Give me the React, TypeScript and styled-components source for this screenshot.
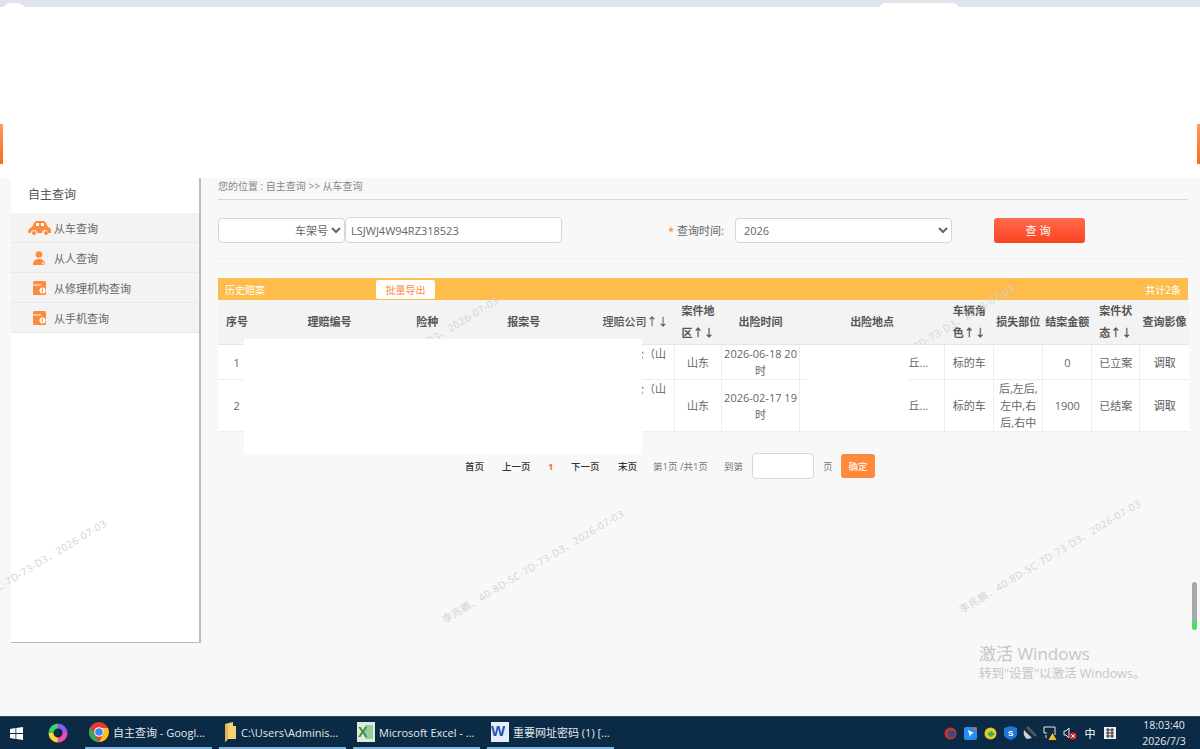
import styled, { createGlobalStyle } from 'styled-components';

const GlobalStyle = createGlobalStyle`
  html, body {
    margin: 0;
    padding: 0;
    height: 749px;
    overflow: hidden;
    background: #f8f8f8;
    font-family: "Open Sans", "Noto Sans CJK SC", sans-serif;
  }
  * { box-sizing: border-box; }
`;

const Page = styled.div`
  position: relative;
  display: flex;
  flex-direction: column;
  width: 1200px;
  height: 749px;
  overflow: hidden;
  color: #666;
`;

/* 顶部被涂白的区域 */
const TopBlock = styled.div`
  position: relative;
  z-index: 5;
  flex: none;
  height: 178px;
  background: #fff;
  border-top: 7px solid #dfe3ec;
`;

const SideStripe = styled.div<{ $right?: boolean }>`
  position: absolute;
  top: 117px;
  ${({ $right }) => ($right ? 'right: 0;' : 'left: 0;')}
  width: 3px;
  height: 40px;
  background: linear-gradient(#ff9a5c, #ff6a1e);
`;

const CornerBump = styled.div<{ $left: number; $width: number }>`
  position: absolute;
  top: -4px;
  left: ${({ $left }) => $left}px;
  width: ${({ $width }) => $width}px;
  height: 8px;
  border-radius: 8px 8px 0 0;
  background: #fff;
`;

const Body = styled.div`
  flex: 1;
  display: flex;
  min-height: 0;
`;

const Sidebar = styled.aside`
  flex: none;
  width: 190px;
  height: 465px;
  margin-left: 11px;
  background: #fff;
  border-right: 2px solid #bcbcbc;
  border-bottom: 1px solid #bcbcbc;
`;

const SideTitle = styled.div`
  height: 35px;
  padding: 9px 0 0 17px;
  font-size: 12px;
  line-height: 16px;
  color: #555;
`;

const NavItem = styled.div`
  display: flex;
  align-items: center;
  height: 30px;
  background: #f3f3f3;
  border-bottom: 1px solid #e8e8e8;
  font-size: 11px;
  color: #666;
`;

const NavIcon = styled.span`
  flex: none;
  display: flex;
  justify-content: center;
  width: 43px;
  padding-left: 14px;
`;

const Main = styled.main`
  flex: 1;
  min-width: 0;
  padding: 0 12px 0 17px;
`;

const Crumb = styled.div`
  height: 22px;
  padding-top: 2px;
  border-bottom: 1px solid #d8d8d8;
  font-size: 10px;
  line-height: 13px;
  color: #888;
`;

const SearchRow = styled.div`
  display: flex;
  align-items: center;
  height: 59px;
  padding-top: 2px;
  border-bottom: 1px solid #f0f0f0;
`;

const Field = styled.select<{ $width: number; $right?: boolean }>`
  width: ${({ $width }) => $width}px;
  height: 25px;
  padding: 0 ${({ $right }) => ($right ? '0' : '4px')};
  border: 1px solid #d6d6d6;
  border-radius: 4px;
  background: #fff;
  font: 11px "Open Sans", "Noto Sans CJK SC", sans-serif;
  color: #666;
  ${({ $right }) => ($right ? 'text-align-last: right;' : '')}
`;

const VinInput = styled.input`
  width: 217px;
  height: 26px;
  padding: 0 5px;
  border: 1px solid #d6d6d6;
  border-radius: 4px;
  background: #fff;
  font: 11px "Open Sans", "Noto Sans CJK SC", sans-serif;
  color: #666;
`;

const TimeLabel = styled.label`
  margin-left: 106px;
  width: 67px;
  font-size: 11px;
  color: #666;
  white-space: pre;
`;

const Star = styled.span`
  color: #ff7a2e;
`;

const SearchBtn = styled.button`
  width: 91px;
  height: 25px;
  margin-left: 42px;
  border: 0;
  border-radius: 3px;
  background: linear-gradient(#ff6a4c, #fb4423);
  color: #fff;
  font: 11px "Open Sans", "Noto Sans CJK SC", sans-serif;
  letter-spacing: 3px;
`;

const ResultBar = styled.div`
  display: flex;
  align-items: center;
  justify-content: space-between;
  height: 22px;
  margin-top: 19px;
  padding: 0 7px;
  background: #fdbc4b;
  font-size: 10px;
  color: #fff;
`;

const BarLeft = styled.div`
  display: flex;
  align-items: center;
`;

const BarTitle = styled.span`
  width: 151px;
`;

const ExportBtn = styled.button`
  width: 59px;
  height: 19px;
  padding: 0;
  border: 0;
  border-radius: 2px;
  background: #fff;
  color: #ff8a4a;
  font: 10px "Open Sans", "Noto Sans CJK SC", sans-serif;
`;

const TableWrap = styled.div`
  position: relative;
`;

const Table = styled.table`
  width: 971px;
  table-layout: fixed;
  border-collapse: collapse;
  background: #f3f3f3;
`;

const Col = styled.col<{ $w: number }>`
  width: ${({ $w }) => $w}px;
`;

const Th = styled.th`
  height: 44px;
  padding: 0;
  border-bottom: 1px solid #e6e6e6;
  font-size: 11px;
  font-weight: 700;
  line-height: 22px;
  text-align: center;
  color: #555;
`;

const ThPlain = styled(Th)`
  font-weight: 500;
`;

const Row = styled.tr`
  position: relative;
  z-index: 2;
`;

const Td = styled.td<{ $h?: number }>`
  height: ${({ $h }) => $h ?? 34}px;
  padding: 0;
  background: #fff;
  border-right: 1px solid #eee;
  border-bottom: 1px solid #eee;
  font-size: 11px;
  line-height: 17px;
  text-align: center;
  color: #666;
`;

const TdClipped = styled(Td)`
  padding-right: 8px;
  vertical-align: top;
  text-align: right;
  white-space: nowrap;
  overflow: hidden;
`;

const TdPlace = styled(Td)`
  padding-right: 16px;
  text-align: right;
`;

const TdOpen = styled(Td)`
  border-right: 0;
  color: #555;
`;

/* 打码用的白块，盖在表格上面 */
const Mask = styled.div<{ $x: number; $y: number; $w: number; $h: number }>`
  position: absolute;
  z-index: 3;
  left: ${({ $x }) => $x}px;
  top: ${({ $y }) => $y}px;
  width: ${({ $w }) => $w}px;
  height: ${({ $h }) => $h}px;
  background: #fff;
`;

const Pager = styled.div`
  display: flex;
  align-items: center;
  height: 26px;
  margin-top: 21px;
  padding-left: 247px;
  font-size: 9.5px;
  color: #333;
`;

const PagerLink = styled.span<{ $w: number; $active?: boolean }>`
  width: ${({ $w }) => $w}px;
  white-space: nowrap;
  color: ${({ $active }) => ($active ? '#ff6a2e' : '#333')};
  font-weight: ${({ $active }) => ($active ? 700 : 500)};
`;

const PagerNote = styled.span<{ $w: number }>`
  width: ${({ $w }) => $w}px;
  white-space: nowrap;
  color: #777;
`;

const PagerInput = styled.input`
  width: 62px;
  height: 26px;
  margin-right: 9px;
  border: 1px solid #d8d8d8;
  border-radius: 4px;
  background: #fff;
`;

const PagerOk = styled.button`
  width: 34px;
  height: 24px;
  padding: 0;
  border: 0;
  border-radius: 3px;
  background: #ff8a3c;
  color: #fff;
  font: 9.5px "Open Sans", "Noto Sans CJK SC", sans-serif;
`;

const Watermark = styled.div<{ $x: number; $y: number }>`
  position: absolute;
  z-index: 1;
  left: ${({ $x }) => $x}px;
  top: ${({ $y }) => $y}px;
  transform: rotate(-31deg);
  transform-origin: left center;
  font-size: 10px;
  line-height: 12px;
  letter-spacing: 0.55px;
  white-space: nowrap;
  color: #d2d2d2;
`;

const Activate = styled.div`
  position: absolute;
  left: 979px;
  top: 644px;
  color: #c6c6c6;
`;

const ActivateTitle = styled.div`
  font-size: 17px;
  line-height: 20px;
`;

const ActivateSub = styled.div`
  font-size: 12.5px;
  line-height: 20px;
`;

const ScrollThumb = styled.div`
  position: absolute;
  left: 1192px;
  top: 582px;
  width: 5px;
  height: 48px;
  border-radius: 3px;
  background: linear-gradient(#a9a9a9 0 82%, #4fdc6c 82%);
`;

const Taskbar = styled.footer`
  position: relative;
  flex: none;
  display: flex;
  align-items: center;
  height: 33px;
  padding-left: 10px;
  background: #0b2a45;
  border-top: 1px solid #31465a;
`;

const StartBtn = styled.span`
  flex: none;
  display: flex;
  width: 38px;
`;

const RingBtn = styled.span`
  flex: none;
  display: flex;
  width: 37px;
`;

const TaskItem = styled.div`
  flex: none;
  display: flex;
  align-items: center;
  gap: 4px;
  width: 127px;
  height: 32px;
  margin-right: 7px;
  padding-left: 4px;
  border-bottom: 2px solid #7cb4dc;
  font-size: 11px;
  color: #e4e8ec;
  white-space: nowrap;
  overflow: hidden;
`;

const Tray = styled.div`
  display: flex;
  align-items: center;
  gap: 6px;
  margin-left: auto;
  padding-right: 5px;
`;

const TrayIcon = styled.span`
  flex: none;
  display: flex;
  justify-content: center;
  width: 14px;
  font-size: 11px;
  color: #fff;
`;

const Clock = styled.div`
  width: 62px;
  margin-left: 10px;
  text-align: center;
  font-size: 10.5px;
  line-height: 16px;
  color: #e4e8ec;
`;

const CarIcon = () => (
  <svg width="24" height="14" viewBox="0 0 24 14">
    <path
      fill="#ff8a3c"
      d="M0 11c0-3 2-4 4-5l2-4c.6-1 1.400-2 3-2h6c1.600 0 2.400 1 3 2l2 4c2 .6 3 2 3 4v1c0 1-1 1-2 1h-1a3 3 0 0 0-6 0H9a3 3 0 0 0-6 0H1c-.6 0-1-.4-1-1z"
    />
    <rect x="8" y="2" width="3" height="3" fill="#fff" />
    <rect x="13" y="2" width="3" height="3" fill="#fff" />
    <circle cx="6" cy="12" r="2" fill="#ff8a3c" />
    <circle cx="18" cy="12" r="2" fill="#ff8a3c" />
  </svg>
);

const PersonIcon = () => (
  <svg width="13" height="14" viewBox="0 0 13 14">
    <circle cx="6" cy="3.500" r="3.300" fill="#ff8a3c" />
    <path fill="#ff8a3c" d="M0 14c0-4 2-6 6-6 2 0 3.500.6 4.500 2L8 14z" />
    <circle cx="10" cy="12" r="1.600" fill="none" stroke="#ff8a3c" />
  </svg>
);

const CalendarIcon = () => (
  <svg width="13" height="14" viewBox="0 0 13 14">
    <rect width="13" height="14" rx="1.500" fill="#ff8a3c" />
    <rect y="3.500" width="8" height="1" fill="#fff" />
    <circle cx="9.500" cy="9.500" r="3" fill="#fff" />
    <rect x="9" y="7.500" width="1" height="4" fill="#ff8a3c" />
  </svg>
);

const WinLogo = () => (
  <svg width="13" height="13" viewBox="0 0 13 13" fill="#fff">
    <path d="M0 2l5.500-.9v5H0zM6.300 1L13 0v6.100H6.300zM0 6.900h5.500v5L0 11zM6.300 6.900H13V13l-6.700-1z" />
  </svg>
);

const RingLogo = () => (
  <svg width="20" height="22" viewBox="0 0 20 22">
    <circle cx="10" cy="11" r="7" fill="none" stroke="#f04ea0" strokeWidth="5" strokeDasharray="11 33" />
    <circle cx="10" cy="11" r="7" fill="none" stroke="#ffd23c" strokeWidth="5" strokeDasharray="11 33" strokeDashoffset="-11" />
    <circle cx="10" cy="11" r="7" fill="none" stroke="#3cd070" strokeWidth="5" strokeDasharray="11 33" strokeDashoffset="-22" />
    <circle cx="10" cy="11" r="7" fill="none" stroke="#8a5cf0" strokeWidth="5" strokeDasharray="11 33" strokeDashoffset="-33" />
  </svg>
);

const ChromeLogo = () => (
  <svg width="20" height="20" viewBox="0 0 20 20">
    <circle cx="10" cy="10" r="10" fill="#e33b2e" />
    <path fill="#3aa757" d="M1.300 5 6 13l4 7A10 10 0 0 1 1.300 5z" />
    <path fill="#fbc116" d="M10 6h9a10 10 0 0 1-9 14l5-9z" />
    <circle cx="10" cy="10" r="4.800" fill="#fff" />
    <circle cx="10" cy="10" r="3.800" fill="#4285f4" />
  </svg>
);

const FolderLogo = () => (
  <svg width="14" height="20" viewBox="0 0 14 20">
    <path fill="#f4d272" d="M2 2l8-2v4h3v13H5l-3 3z" />
    <path fill="#e0b550" d="M2 2l3 2v13l-3 3z" />
  </svg>
);

const ExcelLogo = () => (
  <svg width="18" height="20" viewBox="0 0 18 20">
    <rect width="18" height="20" fill="#dfeadf" />
    <rect x="8" y="3" width="8" height="14" fill="#9ccb9c" />
    <text x="1" y="15" fontSize="14" fontWeight="700" fill="#2d8f3a" fontFamily="Liberation Sans">X</text>
  </svg>
);

const WordLogo = () => (
  <svg width="18" height="20" viewBox="0 0 18 20">
    <rect width="18" height="20" fill="#e6edf8" />
    <text x="0" y="14" fontSize="15" fontWeight="700" fill="#1e55b3" fontFamily="Liberation Sans">W</text>
  </svg>
);

const columns = [38, 147, 48, 145, 78, 47, 78, 145, 49, 49, 49, 48, 49];

const rows = [
  { no: 1, time: ['2026-06-18 20', '时'], part: [] as string[], money: '0', status: '已立案', h: 34 },
  { no: 2, time: ['2026-02-17 19', '时'], part: ['后,左后,', '左中,右', '后,右中'], money: '1900', status: '已结案', h: 51 },
];

const marks: [number, number][] = [
  [443, 614],
  [960, 604],
  [-74, 624],
  [318, 401],
  [834, 389],
];

function App() {
  return (
    <Page>
      <GlobalStyle />
      <TopBlock>
        <CornerBump $left={3} $width={22} />
        <CornerBump $left={878} $width={82} />
        <SideStripe />
        <SideStripe $right />
      </TopBlock>

      <Body>
        <Sidebar>
          <SideTitle>自主查询</SideTitle>
          <NavItem>
            <NavIcon>
              <CarIcon />
            </NavIcon>
            从车查询
          </NavItem>
          <NavItem>
            <NavIcon>
              <PersonIcon />
            </NavIcon>
            从人查询
          </NavItem>
          <NavItem>
            <NavIcon>
              <CalendarIcon />
            </NavIcon>
            从修理机构查询
          </NavItem>
          <NavItem>
            <NavIcon>
              <CalendarIcon />
            </NavIcon>
            从手机查询
          </NavItem>
        </Sidebar>

        <Main>
          <Crumb>您的位置 : 自主查询 &gt;&gt; 从车查询</Crumb>
          <SearchRow>
            <Field $width={127} $right>
              <option>车架号</option>
            </Field>
            <VinInput defaultValue="LSJWJ4W94RZ318523" />
            <TimeLabel>
              <Star>* </Star>查询时间:
            </TimeLabel>
            <Field $width={217}>
              <option>2026</option>
            </Field>
            <SearchBtn>查询</SearchBtn>
          </SearchRow>

          <ResultBar>
            <BarLeft>
              <BarTitle>历史赔案</BarTitle>
              <ExportBtn>批量导出</ExportBtn>
            </BarLeft>
            <span>共计2条</span>
          </ResultBar>

          <TableWrap>
            <Table>
              <colgroup>
                {columns.map((w, i) => (
                  <Col key={i} $w={w} />
                ))}
              </colgroup>
              <thead>
                <tr>
                  <Th>序号</Th>
                  <Th>理赔编号</Th>
                  <Th>险种</Th>
                  <Th>报案号</Th>
                  <ThPlain>理赔公司↑↓</ThPlain>
                  <Th>
                    案件地
                    <br />
                    区↑↓
                  </Th>
                  <Th>出险时间</Th>
                  <Th>出险地点</Th>
                  <Th>
                    车辆角
                    <br />
                    色↑↓
                  </Th>
                  <Th>损失部位</Th>
                  <Th>结案金额</Th>
                  <Th>
                    案件状
                    <br />
                    态↑↓
                  </Th>
                  <Th>查询影像</Th>
                </tr>
              </thead>
              <tbody>
                {rows.map((r) => (
                  <Row key={r.no}>
                    <Td $h={r.h}>{r.no}</Td>
                    <Td $h={r.h} />
                    <Td $h={r.h} />
                    <Td $h={r.h} />
                    <TdClipped $h={r.h}>公（山</TdClipped>
                    <Td $h={r.h}>山东</Td>
                    <Td $h={r.h}>
                      {r.time[0]}
                      <br />
                      {r.time[1]}
                    </Td>
                    <TdPlace $h={r.h}>丘...</TdPlace>
                    <Td $h={r.h}>标的车</Td>
                    <Td $h={r.h}>
                      {r.part.map((p) => (
                        <div key={p}>{p}</div>
                      ))}
                    </Td>
                    <Td $h={r.h}>{r.money}</Td>
                    <Td $h={r.h}>{r.status}</Td>
                    <TdOpen $h={r.h}>调取</TdOpen>
                  </Row>
                ))}
              </tbody>
            </Table>
            <Mask $x={26} $y={39} $w={398} $h={115} />
            <Mask $x={590} $y={45} $w={101} $h={86} />
          </TableWrap>

          <Pager>
            <PagerLink $w={37}>首页</PagerLink>
            <PagerLink $w={46}>上一页</PagerLink>
            <PagerLink $w={23} $active>
              1
            </PagerLink>
            <PagerLink $w={47}>下一页</PagerLink>
            <PagerLink $w={35}>末页</PagerLink>
            <PagerNote $w={71}>第1页 /共1页</PagerNote>
            <PagerNote $w={28}>到第</PagerNote>
            <PagerInput />
            <PagerNote $w={18}>页</PagerNote>
            <PagerOk>确定</PagerOk>
          </Pager>
        </Main>
      </Body>

      {marks.map(([x, y]) => (
        <Watermark key={x} $x={x} $y={y}>
          李兆鹏、40-8D-5C-7D-73-D3、2026-07-03
        </Watermark>
      ))}

      <Activate>
        <ActivateTitle>激活 Windows</ActivateTitle>
        <ActivateSub>转到"设置"以激活 Windows。</ActivateSub>
      </Activate>
      <ScrollThumb />

      <Taskbar>
        <StartBtn>
          <WinLogo />
        </StartBtn>
        <RingBtn>
          <RingLogo />
        </RingBtn>
        <TaskItem>
          <ChromeLogo />
          自主查询 - Googl...
        </TaskItem>
        <TaskItem>
          <FolderLogo />
          C:\Users\Adminis...
        </TaskItem>
        <TaskItem>
          <ExcelLogo />
          Microsoft Excel - ...
        </TaskItem>
        <TaskItem>
          <WordLogo />
          重要网址密码 (1) [...
        </TaskItem>
        <Tray>
          <TrayIcon>
            <svg width="13" height="13" viewBox="0 0 13 13">
              <circle cx="6.500" cy="6.500" r="6" fill="#c8322c" />
              <circle cx="7.500" cy="7" r="3.500" fill="#2d4f80" />
            </svg>
          </TrayIcon>
          <TrayIcon>
            <svg width="13" height="13" viewBox="0 0 13 13">
              <rect width="13" height="13" rx="2" fill="#2a8cf0" />
              <path d="M4 3l6 3-3 1-1 3z" fill="#fff" />
              <circle cx="11.500" cy="1.500" r="1.500" fill="#ff5a2e" />
            </svg>
          </TrayIcon>
          <TrayIcon>
            <svg width="13" height="13" viewBox="0 0 13 13">
              <circle cx="6.500" cy="6.500" r="6" fill="#e8c82c" />
              <path d="M3 7l4-3 4 3-4 3z" fill="#3cae4e" />
            </svg>
          </TrayIcon>
          <TrayIcon>
            <svg width="13" height="14" viewBox="0 0 13 14">
              <path d="M6.500 0L13 2v6c0 3-3 5-6.500 6C3 13 0 11 0 8V2z" fill="#1f74d8" />
              <text x="4" y="10" fontSize="8" fontWeight="700" fill="#fff" fontFamily="Liberation Sans">S</text>
            </svg>
          </TrayIcon>
          <TrayIcon>
            <svg width="14" height="14" viewBox="0 0 14 14">
              <path d="M1 4l8 8-5 1c-3-2-4-5-3-9z" fill="#cfcfcf" />
              <path d="M4 1l9 9" stroke="#555" strokeWidth="3" />
            </svg>
          </TrayIcon>
          <TrayIcon>
            <svg width="14" height="14" viewBox="0 0 14 14">
              <path d="M1 1h11v8M1 1v6h3M3 9v3" fill="none" stroke="#e8e8e8" />
              <path d="M9.500 7l4 7h-8z" fill="#f2c21e" />
            </svg>
          </TrayIcon>
          <TrayIcon>
            <svg width="14" height="14" viewBox="0 0 14 14">
              <path d="M1 5h2l3-3v10L3 9H1z" fill="none" stroke="#e8e8e8" />
              <circle cx="10" cy="10" r="3.500" fill="#e0252c" />
              <path d="M8.500 8.500l3 3m0-3l-3 3" stroke="#fff" />
            </svg>
          </TrayIcon>
          <TrayIcon>中</TrayIcon>
          <TrayIcon>
            <svg width="12" height="12" viewBox="0 0 12 12">
              <rect width="12" height="12" fill="#f4f4f4" />
              <path d="M2 3h8M2 6h8M2 9h8M4 1v10M8 1v10" stroke="#222" />
            </svg>
          </TrayIcon>
          <Clock>
            18:03:40
            <br />
            2026/7/3
          </Clock>
        </Tray>
      </Taskbar>
    </Page>
  );
}

export default App;
